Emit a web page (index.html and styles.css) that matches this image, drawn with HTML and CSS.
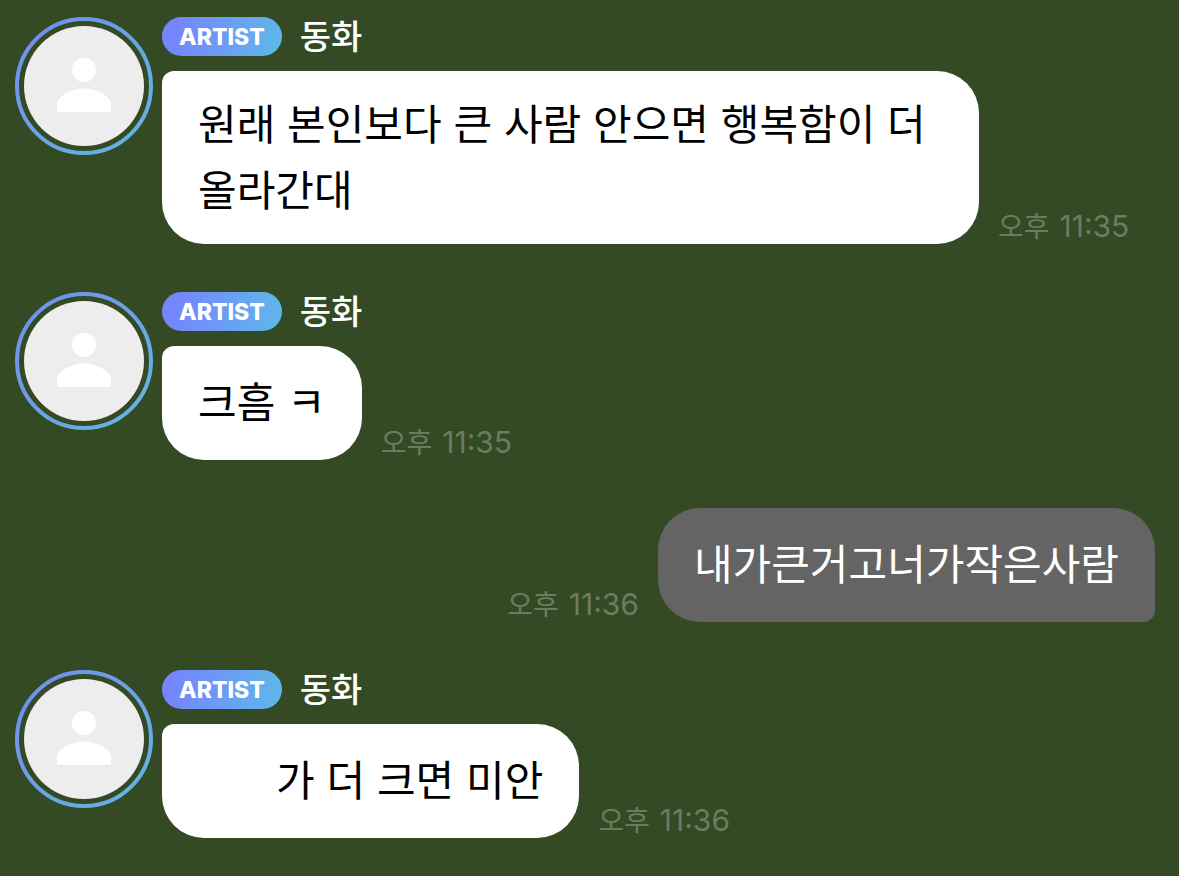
FILE: index.html
```html
<!DOCTYPE html>
<html lang="ko">
<head>
<meta charset="utf-8">
<meta name="viewport" content="width=device-width, initial-scale=1">
<title>동화</title>
<link rel="stylesheet" href="styles.css">
</head>
<body>
<svg class="defs" aria-hidden="true">
  <defs>
    <linearGradient id="ring" x1="0" y1="0" x2="1" y2="1">
      <stop offset="0" stop-color="#748bf0"/>
      <stop offset="1" stop-color="#62b8e0"/>
    </linearGradient>
    <symbol id="avatar" viewBox="0 0 138 138">
      <circle cx="69" cy="69" r="67" fill="none" stroke="url(#ring)" stroke-width="4"/>
      <circle cx="69" cy="69" r="60" fill="#ededed"/>
      <circle cx="69" cy="53" r="12" fill="#fff"/>
      <path d="M42 86.500C42 80 56 71.500 69 71.500s27 8.500 27 15V92.500q0 2.500-2.500 2.500h-49q-2.500 0-2.500-2.500z" fill="#fff"/>
    </symbol>
  </defs>
</svg>
<main class="chat">
  <article class="message">
    <svg class="avatar" role="img" aria-label="동화"><use href="#avatar"/></svg>
    <div class="content">
      <header class="sender"><span class="badge">ARTIST</span><span class="name">동화</span></header>
      <div class="row">
        <p class="bubble multiline">원래 본인보다 큰 사람 안으면 행복함이 더 올라간대</p>
        <time class="time"><span>오후</span> <span class="clock">11:35</span></time>
      </div>
    </div>
  </article>
  <article class="message">
    <svg class="avatar" role="img" aria-label="동화"><use href="#avatar"/></svg>
    <div class="content">
      <header class="sender"><span class="badge">ARTIST</span><span class="name">동화</span></header>
      <div class="row">
        <p class="bubble">크흠 ㅋ</p>
        <time class="time"><span>오후</span> <span class="clock">11:35</span></time>
      </div>
    </div>
  </article>
  <article class="message mine">
    <div class="row">
      <time class="time"><span>오후</span> <span class="clock">11:36</span></time>
      <p class="bubble">내가큰거고너가작은사람</p>
    </div>
  </article>
  <article class="message">
    <svg class="avatar" role="img" aria-label="동화"><use href="#avatar"/></svg>
    <div class="content">
      <header class="sender"><span class="badge">ARTIST</span><span class="name">동화</span></header>
      <div class="row">
        <p class="bubble indented">가 더 크면 미안</p>
        <time class="time"><span>오후</span> <span class="clock">11:36</span></time>
      </div>
    </div>
  </article>
</main>
</body>
</html>
```
FILE: styles.css
```css
* { box-sizing: border-box; }

body {
  margin: 0;
  min-height: 100vh;
  background: #344a24;
  color: #000;
  font-family: Inter, "Noto Sans CJK KR", sans-serif;
}

.defs { position: absolute; width: 0; height: 0; }

.chat {
  display: flex;
  flex-direction: column;
  gap: 48px;
  padding: 17px 24px 38px 15px;
}

.message { display: flex; align-items: flex-start; gap: 9px; }
.message.mine { justify-content: flex-end; }

.avatar { flex: none; width: 138px; height: 138px; }

.content { min-width: 0; }

.sender {
  display: flex;
  align-items: center;
  gap: 18px;
  height: 39px;
  margin-bottom: 15px;
}

.badge {
  display: flex;
  align-items: center;
  padding: 0 17px;
  height: 39px;
  border-radius: 20px;
  background: linear-gradient(100deg, #7585fb 10%, #5fb8ea);
  color: #fff;
  font-size: 23px;
  font-weight: 800;
}

.name { color: #fff; font-size: 34px; font-weight: 500; line-height: 39px; }

.row { display: flex; align-items: flex-end; gap: 19px; }

.bubble {
  max-width: 817px;
  margin: 0;
  padding: 24px 36px;
  border-radius: 12px 42px 42px 42px;
  background: #fff;
  font-size: 42px;
  line-height: 66px;
  word-break: keep-all;
}

.multiline { padding-top: 21px; padding-bottom: 20px; }
.indented { padding-left: 114px; }

.mine .bubble {
  border-radius: 42px 42px 12px 42px;
  background: #646464;
  color: #fff;
}

.time {
  display: flex;
  align-items: baseline;
  gap: 10px;
  color: #6b7c61;
  font-size: 28px;
  line-height: 34px;
  white-space: nowrap;
}

.clock { font-size: 30px; }
```
